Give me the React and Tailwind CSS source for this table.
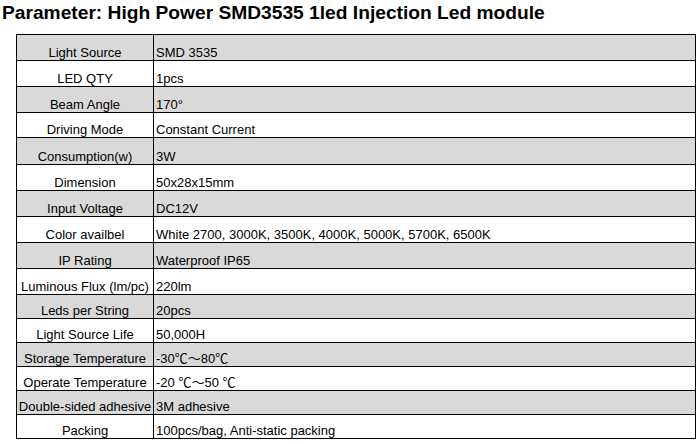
const rows = [
  { label: "Light Source", value: "SMD 3535", h: "h-[26px]" },
  { label: "LED QTY", value: "1pcs", h: "h-[26px]" },
  { label: "Beam Angle", value: "170°", h: "h-[26px]" },
  { label: "Driving Mode", value: "Constant Current", h: "h-[25px]" },
  { label: "Consumption(w)", value: "3W", h: "h-[27px]" },
  { label: "Dimension", value: "50x28x15mm", h: "h-[26px]" },
  { label: "Input Voltage", value: "DC12V", h: "h-[26px]" },
  { label: "Color availbel", value: "White 2700, 3000K, 3500K, 4000K, 5000K, 5700K, 6500K", h: "h-[26px]" },
  { label: "IP Rating", value: "Waterproof IP65", h: "h-[26px]" },
  { label: "Luminous Flux (lm/pc)", value: "220lm", h: "h-[26px]" },
  { label: "Leds per String", value: "20pcs", h: "h-[24px]" },
  { label: "Light Source Life", value: "50,000H", h: "h-[24px]" },
  { label: "Storage Temperature", value: "-30℃～80℃", h: "h-[24px]" },
  { label: "Operate Temperature", value: "-20 ℃～50 ℃", h: "h-[24px]" },
  { label: "Double-sided adhesive", value: "3M adhesive", h: "h-[24px]" },
  { label: "Packing", value: "100pcs/bag, Anti-static packing", h: "h-[24px]" },
]

export default function App() {
  return (
    <div className="w-[700px] h-[444px] bg-white text-black font-['Liberation_Sans','Noto_Sans_CJK_SC',sans-serif]">
      {/* Title */}
      <div className="h-[34px] pl-[2px] pt-[2px] text-[19.2px] leading-[22px] font-bold whitespace-nowrap">
        Parameter: High Power SMD3535 1led Injection Led module
      </div>

      {/* Spec table */}
      <div className="ml-[16px] w-[680px] border-l border-r border-b border-black text-[13px] leading-[15px]">
        {rows.map((row, i) => (
          <div
            key={row.label}
            className={`flex border-t border-black ${row.h} ${i % 2 === 0 ? "bg-[#d9d9d9]" : "bg-white"}`}
          >
            <div className="w-[137px] shrink-0 border-r border-black flex items-end justify-center whitespace-nowrap">
              {row.label}
            </div>
            <div className="flex-1 flex items-end pl-[2px] whitespace-nowrap">{row.value}</div>
          </div>
        ))}
      </div>
    </div>
  )
}
